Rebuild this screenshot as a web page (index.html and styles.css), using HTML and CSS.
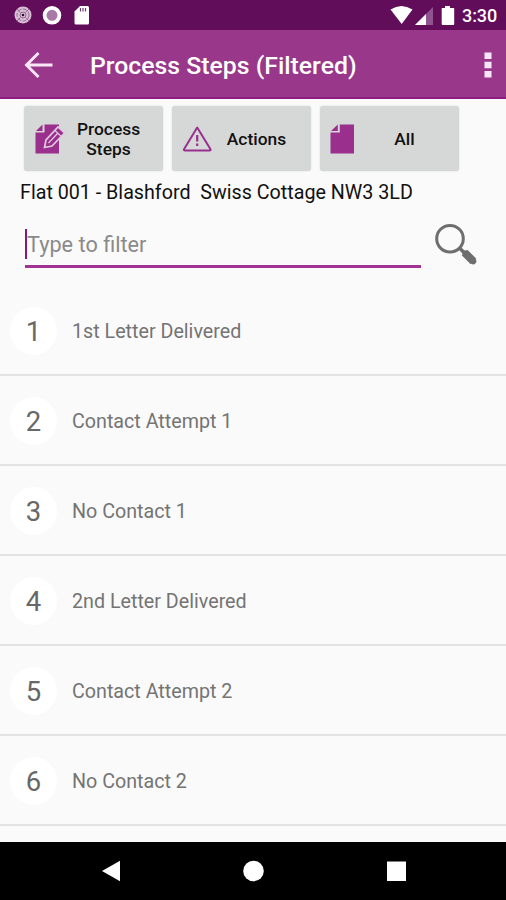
FILE: index.html
```html
<!DOCTYPE html>
<html lang="en">
<head>
<meta charset="utf-8">
<title>Process Steps (Filtered)</title>
<link rel="stylesheet" href="styles.css">
</head>
<body>
<header class="status">
  <svg class="status-left" width="100" height="30" viewBox="0 0 100 30">
    <circle cx="23" cy="15" r="8.5" fill="#d9bfd6"/>
    <g fill="none" stroke="#8d6189" stroke-width=".9"><circle cx="23" cy="15" r="3"/><circle cx="23" cy="15" r="6" stroke-dasharray="4 1.5"/><path d="M17 9l3.500 3.500M29 9l-3.500 3.500M17 21l3.500-3.500M29 21l-3.500-3.500"/></g>
    <circle cx="23" cy="15" r="1.300" fill="#300b2d"/>
    <circle cx="52" cy="15.300" r="7.400" fill="#a879a7" stroke="#fff" stroke-width="3.800"/>
    <path d="M80 6h7.500q1.500 0 1.500 1.500v15.500q0 1.500-1.500 1.500H76q-1.500 0-1.500-1.500V11.500z" fill="#fff"/>
    <path d="M80.500 8v3.500M83 8v3.500M85.500 8v3.500" stroke="#6b3d68" stroke-width="1.200"/>
  </svg>
  <svg class="status-right" width="70" height="30" viewBox="388 0 70 30">
    <path d="M390.500 9.500Q401.500 2.500 412.500 9.500L401.700 24z" fill="#fff"/>
    <path d="M433 7v18h-18z" fill="#8f5390"/><path d="M426 14v11h-11z" fill="#fff"/>
    <path d="M445 6h5v2h3.500q.7 0 .7.700V24q0 .9-.9.900h-10.700q-.900 0-.900-.900V8.700q0-.700.700-.700H445z" fill="#fff"/>
  </svg>
  <span class="clock">3:30</span>
</header>
<div class="appbar">
  <svg class="back" width="30" height="28" viewBox="24 51 30 28"><path d="M52.500 65H27M38.500 53L26.500 65l12 12" fill="none" stroke="#f7e6f5" stroke-width="2.900"/></svg>
  <h1>Process Steps (Filtered)</h1>
  <svg class="more" width="8" height="28" viewBox="0 0 8 28"><path d="M.5 1.500h7v6.500h-7zM.5 10.800h7v6.500h-7zM.5 20h7v6.500h-7z" fill="#f7e6f5"/></svg>
</div>
<main>
  <div class="buttons">
    <button><svg width="32" height="32" viewBox="34 122 32 32"><path d="M44.500 123.500H59V152.500H35.500V131.500H44.500z" fill="#9a2f8e"/><path d="M36 130l6.500-6.500v6.500z" fill="#9a2f8e"/><path d="M44.500 146.500l1.500-7.500L58 126l6.500 6L52 145z" fill="#9a2f8e" stroke="#dfcade" stroke-width="1.700"/><path d="M48.500 142l9-9.500M55 129.500l6 5.700" fill="none" stroke="#dfcade" stroke-width="1.200"/></svg><span>Process<br>Steps</span></button>
    <button><svg width="32" height="32" viewBox="182 122 32 32"><path d="M197.200 126.500L210.500 148.200q.4 1.300-1 1.300H185q-1.400 0-1-1.300z" fill="none" stroke="#9a2f8e" stroke-width="2" stroke-linejoin="round"/><path d="M197.200 134v6.500M197.200 142.500v2.500" stroke="#9a2f8e" stroke-width="2.200"/></svg><span>Actions</span></button>
    <button><svg width="32" height="32" viewBox="330 122 32 32"><path d="M339.800 123.500H354V152.500H330.500V131.500H339.800z" fill="#9a2f8e"/><path d="M331 130l6.800-6.500v6.500z" fill="#9a2f8e"/></svg><span>All</span></button>
  </div>
  <p class="address">Flat 001 - Blashford&nbsp; Swiss Cottage NW3 3LD</p>
  <div class="search">
    <div class="field"><i class="caret"></i><span>Type to filter</span></div>
    <svg width="46" height="46" viewBox="433 222 46 46"><circle cx="450" cy="238.700" r="13.300" fill="none" stroke="#6e6e6e" stroke-width="3"/><path d="M459.500 248l5 5" stroke="#6e6e6e" stroke-width="3.500"/><path d="M465.500 253.500l7.800 7.800" stroke="#6e6e6e" stroke-width="6" stroke-linecap="round"/><path d="M464.500 252.500l9 9" stroke="#6e6e6e" stroke-width="8"/></svg>
  </div>
  <ul class="steps">
    <li><b>1</b><span>1st Letter Delivered</span></li>
    <li><b>2</b><span>Contact Attempt 1</span></li>
    <li><b>3</b><span>No Contact 1</span></li>
    <li><b>4</b><span>2nd Letter Delivered</span></li>
    <li><b>5</b><span>Contact Attempt 2</span></li>
    <li><b>6</b><span>No Contact 2</span></li>
  </ul>
</main>
<footer class="nav">
  <svg width="506" height="58" viewBox="0 842 506 58"><path d="M102 871l18-10.300v20.600z" fill="#fff"/><circle cx="253.500" cy="871" r="10.300" fill="#fff"/><path d="M387 861.500h19V881h-19z" fill="#fff"/></svg>
</footer>
</body>
</html>
```

FILE: styles.css
```css
* { box-sizing: border-box; }
body {
  margin: 0;
  width: 506px;
  height: 900px;
  overflow: hidden;
  display: flex;
  flex-direction: column;
  background: #fafafa;
  font-family: Roboto, "Liberation Sans", sans-serif;
}
svg { display: block; flex: none; }
.status { display: flex; height: 30px; flex: none; background: #620d59; color: #fff; }
.status-right { margin-left: 288px; }
.clock { margin-left: 4px; font-size: 18px; font-weight: 500; line-height: 32px; letter-spacing: -0.1px; white-space: nowrap; }
.appbar {
  display: flex;
  align-items: center;
  flex: none;
  height: 69px;
  padding: 3px 14px 1px 24px;
  background: #99388b;
  border-bottom: 2px solid #8c1c80;
  color: #fff;
}
h1 { margin: 2px 0 0 36px; font-size: 24.8px; font-weight: 500; line-height: 34px; white-space: nowrap; }
.more { margin-left: auto; }
main { flex: 1; min-height: 0; overflow: hidden; }
.buttons { display: flex; gap: 9px; padding: 7px 0 0 24px; }
button {
  display: flex;
  align-items: center;
  width: 139px;
  height: 65px;
  padding: 0 12px 0 10px;
  border: 0;
  border-radius: 3px;
  background: #d6d8d7;
  box-shadow: 0 0 2px #d6d8d7;
  color: #111;
  font: 500 17.4px/20px Roboto, "Liberation Sans", sans-serif;
}
button span { flex: 1; text-align: center; }
.address { margin: 10px 0 0 20px; font-size: 19.7px; line-height: 24px; color: #111; white-space: nowrap; }
.search { display: flex; height: 81px; padding-left: 25px; }
.field {
  display: flex;
  align-items: center;
  width: 396px;
  height: 63px;
  padding-top: 17px;
  border-bottom: 3px solid #9f3494;
  color: #8a8a8a;
  font-size: 21.7px;
}
.field span { padding-top: 2px; }
.caret { width: 2px; height: 30px; background: #85187b; }
.search svg { margin: 17px 0 0 12px; }
.steps { margin: 0; padding: 0; list-style: none; }
.steps li {
  display: flex;
  align-items: center;
  height: 90px;
  padding: 2px 0 0 10px;
  border-bottom: 2px solid #e2e2e2;
  color: #747474;
  font-size: 19.7px;
}
.steps b {
  width: 47px;
  height: 48px;
  margin-right: 15px;
  border-radius: 50%;
  background: #fff;
  font-size: 27.5px;
  font-weight: 400;
  line-height: 49px;
  text-align: center;
  color: #686868;
}
.nav { flex: none; height: 58px; background: #000; }
```
